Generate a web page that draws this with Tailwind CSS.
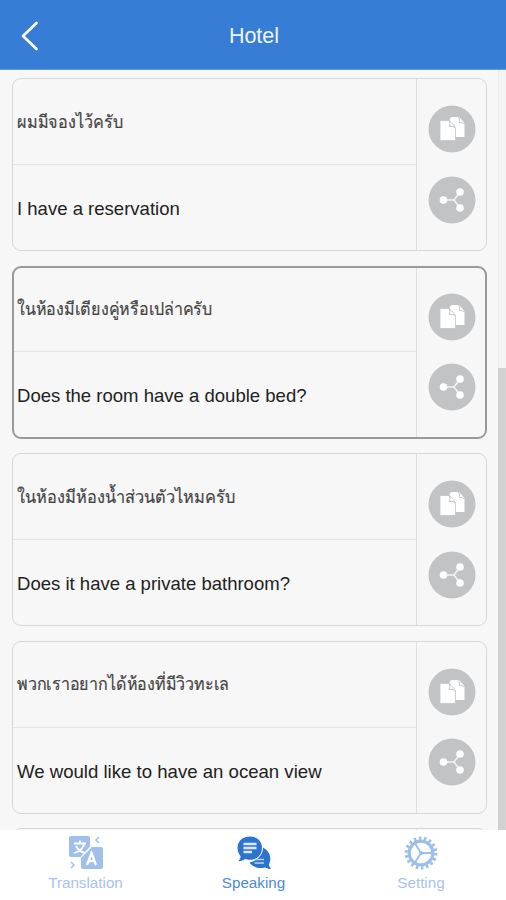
<!DOCTYPE html>
<html lang="th">
<head>
<meta charset="utf-8">
<title>Hotel</title>
<script src="https://cdn.jsdelivr.net/npm/@tailwindcss/browser@4"></script>
</head>
<body class="w-[506px] h-[900px] overflow-hidden flex flex-col bg-[#f7f7f7] font-['Liberation_Sans','Noto_Sans',sans-serif] text-[#222]">
<svg class="hidden">
  <symbol id="copy" viewBox="0 0 48 48">
    <circle cx="24" cy="24" r="23.5" fill="#c1c3c4"/>
    <path d="M21.500 15.500q0-3.500 3-3.500h5q2 0 3.500 2l2.500 3q1 1.200 1 3v12H22z" fill="#fff"/>
    <path d="M30.500 12.500c1.500 1.800 1 4 .5 5 2-.5 4 0 5 1.500" fill="none" stroke="#c1c3c4" stroke-width=".9"/>
    <path d="M12 15.500h8q2 0 3.500 2l3 3.500q1 1.200 1 3v11.500H12z" fill="#fff" stroke="#c1c3c4" stroke-width=".8"/>
    <path d="M21 15.500c1.500 1.800 1 4.500 0 6 3-.8 5.500 0 6.500 2" fill="none" stroke="#c1c3c4" stroke-width="1"/>
  </symbol>
  <symbol id="share" viewBox="0 0 48 48">
    <circle cx="24" cy="24" r="23.500" fill="#c1c3c4"/>
    <path d="M15.500 24H26l6-8M26 24l6 8" fill="none" stroke="#f4f4f4" stroke-width="1.500"/>
    <g fill="#fff"><circle cx="15.500" cy="24" r="3.800"/><circle cx="32" cy="16" r="3.800"/><circle cx="32" cy="32" r="3.800"/></g>
  </symbol>
</svg>
<header class="relative z-10 h-[70px] shrink-0 bg-[#377dd6] border-b border-[#6699d8] grid grid-cols-[60px_1fr_60px] items-center">
  <svg class="w-[20px] h-[32px] ml-[20px]" viewBox="0 0 20 32" fill="none" stroke="#fff" stroke-width="2.600" stroke-linecap="round" stroke-linejoin="round"><path d="M16.500 4L3 17l13.500 13"/></svg>
  <h1 class="text-center text-[21.500px] text-[#edf4fd] pt-[4px] pl-[2px]">Hotel</h1>
</header>
<main class="h-[760px] shrink-0 overflow-hidden flex">
  <div class="w-[498px] pl-[12px] pt-[8px] pr-[11px] flex flex-col gap-[14.500px]">
    <article class="h-[173px] shrink-0 rounded-[9px] border-[1.500px] border-[#d6d8d8] flex">
      <div class="w-[404px] border-r border-[#dedede] flex flex-col">
        <p class="h-[86px] border-b border-[#e5e5e5] flex items-center pl-[4px]"><svg class="w-[240px] h-[40px] overflow-visible"><text x="0" y="26" textLength="106" lengthAdjust="spacingAndGlyphs" font-size="18" fill="#444" stroke="#444" stroke-width=".2">ผมมีจองไว้ครับ</text></svg></p>
        <p class="flex-1 flex items-center pl-[4px] pt-[3px] text-[18.550px] whitespace-nowrap">I have a reservation</p>
      </div>
      <div class="flex-1 flex flex-col items-center pt-[26px] gap-[22.500px]"><svg class="size-[48px]"><use href="#copy"/></svg><svg class="size-[48px]"><use href="#share"/></svg></div>
    </article>
    <article class="h-[173px] shrink-0 rounded-[9px] border-2 border-[#999] flex">
      <div class="w-[403px] border-r border-[#dedede] flex flex-col">
        <p class="h-[84px] border-b border-[#e5e5e5] flex items-center pl-[3px]"><svg class="w-[240px] h-[40px] overflow-visible"><text x="0" y="26" textLength="195" lengthAdjust="spacingAndGlyphs" font-size="18" fill="#444" stroke="#444" stroke-width=".2">ในห้องมีเตียงคู่หรือเปล่าครับ</text></svg></p>
        <p class="flex-1 flex items-center pl-[3px] pt-[3px] text-[18.550px] whitespace-nowrap">Does the room have a double bed?</p>
      </div>
      <div class="flex-1 flex flex-col items-center pt-[25px] pl-[2px] gap-[22.500px]"><svg class="size-[48px]"><use href="#copy"/></svg><svg class="size-[48px]"><use href="#share"/></svg></div>
    </article>
    <article class="h-[173px] shrink-0 rounded-[9px] border-[1.500px] border-[#d6d8d8] flex">
      <div class="w-[404px] border-r border-[#dedede] flex flex-col">
        <p class="h-[86px] border-b border-[#e5e5e5] flex items-center pl-[4px]"><svg class="w-[240px] h-[40px] overflow-visible"><text x="0" y="26" textLength="218" lengthAdjust="spacingAndGlyphs" font-size="18" fill="#444" stroke="#444" stroke-width=".2">ในห้องมีห้องน้ำส่วนตัวไหมครับ</text></svg></p>
        <p class="flex-1 flex items-center pl-[4px] pt-[3px] text-[18.550px] whitespace-nowrap">Does it have a private bathroom?</p>
      </div>
      <div class="flex-1 flex flex-col items-center pt-[26px] gap-[22.500px]"><svg class="size-[48px]"><use href="#copy"/></svg><svg class="size-[48px]"><use href="#share"/></svg></div>
    </article>
    <article class="h-[173px] shrink-0 rounded-[9px] border-[1.500px] border-[#d6d8d8] flex">
      <div class="w-[404px] border-r border-[#dedede] flex flex-col">
        <p class="h-[86px] border-b border-[#e5e5e5] flex items-center pl-[4px]"><svg class="w-[240px] h-[40px] overflow-visible"><text x="0" y="26" textLength="212" lengthAdjust="spacingAndGlyphs" font-size="18" fill="#444" stroke="#444" stroke-width=".2">พวกเราอยากได้ห้องที่มีวิวทะเล</text></svg></p>
        <p class="flex-1 flex items-center pl-[4px] pt-[3px] text-[18.600px] whitespace-nowrap">We would like to have an ocean view</p>
      </div>
      <div class="flex-1 flex flex-col items-center pt-[26px] gap-[22.500px]"><svg class="size-[48px]"><use href="#copy"/></svg><svg class="size-[48px]"><use href="#share"/></svg></div>
    </article>
    <article class="h-[173px] shrink-0 rounded-[9px] border-[1.500px] border-[#d6d8d8] flex"><div class="w-[404px] border-r border-[#dedede]"></div></article>
  </div>
  <div class="w-[8px] bg-[#f4f4f4] border-l border-[#ececec] pt-[298px]"><div class="w-[8px] -ml-px h-[462px] bg-[#d2d2d2]"></div></div>
</main>
<nav class="h-[70px] shrink-0 bg-white grid grid-cols-[171px_165px_170px] text-center text-[15.200px] leading-[20px]">
  <div class="flex flex-col items-center pt-[4px] text-[#a7c3eb]">
    <svg class="w-[36px] h-[38px]" viewBox="0 0 36 38" fill="none">
      <path d="M3 2h17q2 0 2 2v8.500L12.500 23H3q-2 0-2-2V4q0-2 2-2z" fill="#a0c0eb"/>
      <path d="M24 13h9q2 0 2 2v18q0 2-2 2H15q-2 0-2-2v-9z" fill="#a0c0eb"/>
      <path d="M6 9.500h12M12 6.500v3M8 12q3 5.500 9 7M16 10.500q-2 6.500-10 8.500" stroke="#fff" stroke-width="1.800"/>
      <path d="M19 31l4.500-12 4.500 12M20.500 27h6" stroke="#fff" stroke-width="2.300"/>
      <path d="M31 3L28 6l3 3M3 28l3 3-3 3" stroke="#a0c0eb" stroke-width="1.500"/>
    </svg>
    <span class="mt-[1px]">Translation</span>
  </div>
  <div class="flex flex-col items-center pt-[4px] text-[#4d89dc]">
    <svg class="w-[36px] h-[38px]" viewBox="0 0 36 38">
      <path d="M27 13.500c5 2.500 8.500 8 7 14 -.3 1.500-1 2.500-1 3.500 0 1.500 1.500 2.500 2 4-2 .2-4-.5-6-1.500-6 1.500-12 0-15.500-5C21 27 26 21 27 13.500z" fill="#2d74d0"/>
      <path d="M18 25.500h10M18.500 29h9.500" stroke="#b9d2f3" stroke-width="1.400"/>
      <path d="M14 2C6.500 2 1 7 1 14c0 3.500 1.500 6 3 8 .5 2-1 4-2.500 5.500 3 .5 5.500-.5 7.500-2 9 3 17.500-2.500 17.500-11.500C26.500 7 21 2 14 2z" fill="#2d74d0" stroke="#fff" stroke-width="1"/>
      <path d="M7.500 10h13M7.500 14h13M7.500 18h8.500" stroke="#dce9fa" stroke-width="2.300"/>
    </svg>
    <span class="mt-[1px]">Speaking</span>
  </div>
  <div class="flex flex-col items-center pt-[4px] text-[#a7c3eb]">
    <svg class="w-[36px] h-[38px]" viewBox="0 0 36 38" fill="none" stroke="#9dbeea">
      <circle cx="18" cy="19" r="14.800" stroke-width="3.200" stroke-dasharray="2.500 2.666"/>
      <circle cx="18" cy="19" r="11.900" stroke-width="3.200"/>
      <path d="M18 19h11M18 19l-6-9.500M18 19l-6 9.500" stroke-width="1.900"/><circle cx="18" cy="19" r="1.900" fill="#9dbeea" stroke="none"/>
    </svg>
    <span class="mt-[1px]">Setting</span>
  </div>
</nav>
</body>
</html>
